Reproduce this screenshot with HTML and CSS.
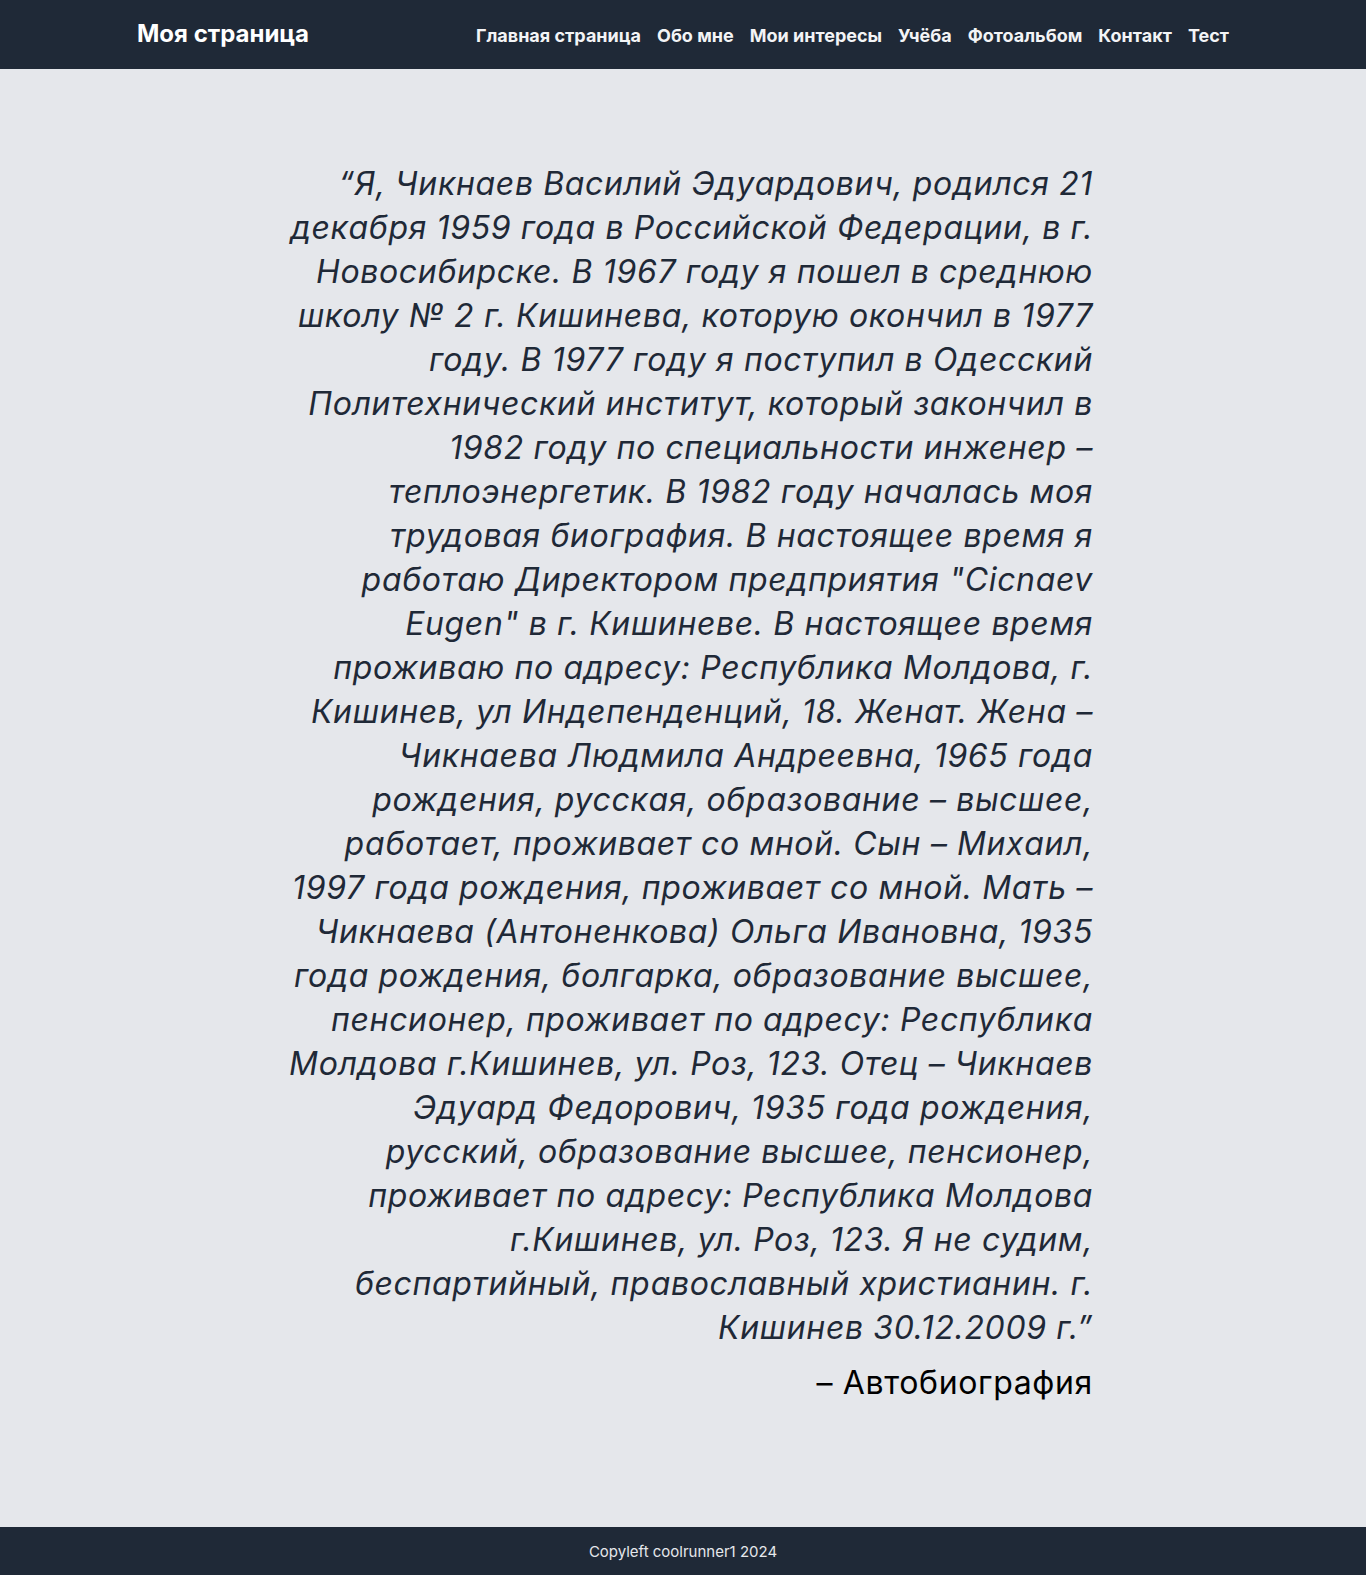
FILE: index.html
```html
<!DOCTYPE html>
<html lang="ru">
<head>
<meta charset="utf-8">
<title>Моя страница</title>
<link rel="stylesheet" href="styles.css">
</head>
<body>
<div class="page">
  <header class="topbar">
    <div class="topbar-inner">
      <a class="brand" href="#">Моя страница</a>
      <nav class="nav">
        <a href="#">Главная страница</a>
        <a href="#">Обо мне</a>
        <a href="#">Мои интересы</a>
        <a href="#">Учёба</a>
        <a href="#">Фотоальбом</a>
        <a href="#">Контакт</a>
        <a href="#">Тест</a>
      </nav>
    </div>
  </header>
  <main class="main">
    <figure class="quote">
      <blockquote class="quote-text">“Я, Чикнаев Василий Эдуардович, родился 21 декабря 1959 года в Российской Федерации, в г. Новосибирске. В 1967 году я пошел в среднюю школу № 2 г. Кишинева, которую окончил в 1977 году. В 1977 году я поступил в Одесский Политехнический институт, который закончил в 1982 году по специальности инженер – теплоэнергетик. В 1982 году началась моя трудовая биография. В настоящее время я работаю Директором предприятия "Cicnaev Eugen" в г. Кишиневе. В настоящее время проживаю по адресу: Республика Молдова, г. Кишинев, ул Индепенденций, 18. Женат. Жена – Чикнаева Людмила Андреевна, 1965 года рождения, русская, образование – высшее, работает, проживает со мной. Сын – Михаил, 1997 года рождения, проживает со мной. Мать – Чикнаева (Антоненкова) Ольга Ивановна, 1935 года рождения, болгарка, образование высшее, пенсионер, проживает по адресу: Республика Молдова г.Кишинев, ул. Роз, 123. Отец – Чикнаев Эдуард Федорович, 1935 года рождения, русский, образование высшее, пенсионер, проживает по адресу: Республика Молдова г.Кишинев, ул. Роз, 123. Я не судим, беспартийный, православный христианин. г. Кишинев 30.12.2009 г.”</blockquote>
      <figcaption class="quote-author">– Автобиография</figcaption>
    </figure>
  </main>
  <footer class="footer">Copyleft coolrunner1 2024</footer>
</div>
</body>
</html>
```

FILE: styles.css
```css
* { box-sizing: border-box; }
html, body { margin: 0; padding: 0; }
body {
  font-family: Inter, "Noto Sans", sans-serif;
  background: #e5e7eb;
  color: #1f2937;
}
.page {
  min-height: 1575px;
  display: flex;
  flex-direction: column;
}
.topbar {
  background: #1f2937;
  height: 69px;
}
.topbar-inner {
  max-width: 1092px;
  height: 100%;
  margin: 0 auto;
  display: flex;
  align-items: center;
  justify-content: space-between;
}
.brand {
  color: #ffffff;
  font-weight: 700;
  font-size: 24px;
  text-decoration: none;
  padding-bottom: 3px;
}
.nav {
  display: flex;
  gap: 16px;
  padding-top: 1px;
}
.nav a {
  color: #f3f4f6;
  font-weight: 700;
  font-size: 18px;
  text-decoration: none;
}
.main {
  flex: 1;
  padding-top: 93px;
}
.quote {
  max-width: 820px;
  margin: 0 auto;
  text-align: right;
}
.quote-text {
  margin: 0;
  font-style: italic;
  font-size: 32px;
  line-height: 44px;
  letter-spacing: 0.02em;
  color: #1f2937;
}
.quote-author {
  margin-top: 11px;
  font-size: 32px;
  line-height: 44px;
  letter-spacing: 0.02em;
  color: #000000;
}
.footer {
  background: #1f2937;
  color: #e5e7eb;
  height: 48px;
  display: flex;
  align-items: center;
  justify-content: center;
  font-size: 15px;
}
```
